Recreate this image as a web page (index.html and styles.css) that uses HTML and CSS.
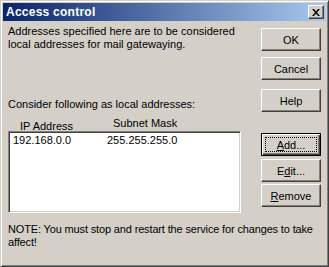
FILE: index.html
```html
<!DOCTYPE html>
<html lang="en">

<head>
    <meta charset="UTF-8">
    <title>Access control</title>
    <link rel="stylesheet" href="styles.css">
</head>

<body>
    <div class="window">
        <div class="titlebar">
            <span class="title">Access control</span>
            <button class="close-btn">
                <svg width="8" height="7" viewBox="0 0 8 7">
                    <path d="M0 0h2l2 2.5L6 0h2L5 3.5 8 7H6L4 4.5 2 7H0l3-3.5z" fill="#000"/>
                </svg>
            </button>
        </div>
        <div class="content">
            <div class="left-column">
                <p class="intro">Addresses specified here are to be considered<br>local addresses for mail gatewaying.</p>
                <p class="consider">Consider following as local addresses:</p>
                <div class="list-header">
                    <span class="col-ip">IP Address</span>
                    <span class="col-mask">Subnet Mask</span>
                </div>
                <div class="listbox">
                    <div class="row">
                        <span class="col-ip">192.168.0.0</span>
                        <span>255.255.255.0</span>
                    </div>
                </div>
            </div>
            <div class="right-column">
                <button class="btn btn-ok">OK</button>
                <button class="btn btn-cancel">Cancel</button>
                <button class="btn btn-help">Help</button>
                <button class="btn btn-add default"><u>A</u>dd...</button>
                <button class="btn btn-edit">E<u>d</u>it...</button>
                <button class="btn btn-remove"><u>R</u>emove</button>
            </div>
        </div>
        <p class="note">NOTE: You must stop and restart the service for changes to take<br>affect!</p>
    </div>
</body>

</html>
```

FILE: styles.css
```css
body {
    margin: 0;
    padding: 0;
    font-family: "Liberation Sans", Arial, sans-serif;
    font-size: 11px;
    color: #000;
}

.window {
    width: 329px;
    height: 267px;
    box-sizing: border-box;
    background-color: #d4d0c8;
    border: 1px solid;
    border-color: #d4d0c8 #404040 #404040 #d4d0c8;
    box-shadow: inset 1px 1px #fff, inset -1px -1px #808080;
    padding: 2px;
}

.titlebar {
    height: 18px;
    display: flex;
    align-items: center;
    justify-content: space-between;
    background: linear-gradient(to right, #0a246a, #a6caf0);
    padding: 0 2px 0 3px;
}

.title {
    color: #fff;
    font-weight: bold;
    font-size: 12px;
    letter-spacing: 0.25px;
}

.close-btn {
    width: 16px;
    height: 14px;
    padding: 0;
    display: flex;
    align-items: center;
    justify-content: center;
    background: #d4d0c8;
    border: 1px solid;
    border-color: #fff #404040 #404040 #fff;
    box-shadow: inset -1px -1px #808080;
}

.content {
    display: flex;
    justify-content: space-between;
    padding: 0 5px 0 5px;
}

.left-column {
    width: 233px;
}

p {
    margin: 0;
    line-height: 13px;
}

.intro {
    margin-top: 4px;
    white-space: nowrap;
}

.consider {
    margin-top: 47px;
}

.list-header {
    display: flex;
    margin-top: 6px;
    height: 14px;
}

.list-header .col-ip {
    padding-left: 12px;
    width: 93px;
    padding-top: 3px;
}

.listbox {
    height: 82px;
    box-sizing: border-box;
    background: #fff;
    border: 1px solid;
    border-color: #808080 #fff #fff #808080;
    box-shadow: inset 1px 1px #404040, inset -1px -1px #d4d0c8;
    padding: 2px 4px;
}

.row {
    display: flex;
    line-height: 13px;
}

.row .col-ip {
    width: 94px;
}

.right-column {
    display: flex;
    flex-direction: column;
    padding-top: 7px;
}

.btn {
    width: 60px;
    height: 23px;
    box-sizing: border-box;
    padding: 0;
    background: #d4d0c8;
    border: 1px solid;
    border-color: #fff #404040 #404040 #fff;
    box-shadow: inset -1px -1px #808080;
    font-family: "Liberation Sans", Arial, sans-serif;
    font-size: 11px;
    color: #000;
}

.btn-cancel {
    margin-top: 6px;
}

.btn-help {
    margin-top: 9px;
}

.btn-add {
    margin-top: 21px;
}

.btn-edit {
    margin-top: 3px;
}

.btn-remove {
    margin-top: 2px;
}

.default {
    border-color: #000;
    box-shadow: inset 1px 1px #fff, inset -1px -1px #404040, inset -2px -2px #808080;
    outline: 1px dotted #000;
    outline-offset: -5px;
}

.note {
    margin-top: 10px;
    padding-left: 5px;
    white-space: nowrap;
    letter-spacing: -0.15px;
}
```
